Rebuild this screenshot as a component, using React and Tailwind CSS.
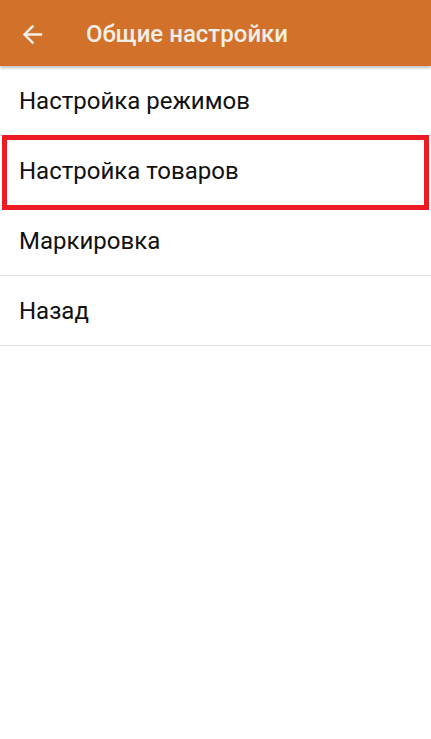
export default function App() {
  const items = ["Настройка режимов", "Настройка товаров", "Маркировка", "Назад"];
  return (
    <div className="w-[431px] h-[739px] bg-white relative overflow-hidden" style={{ fontFamily: "Roboto, 'Noto Sans', sans-serif" }}>
      <div className="h-[66px] bg-[#d2722a] flex items-center relative z-10 shadow-[0_2px_3px_rgba(0,0,0,0.25)]">
        <div className="w-[86px] flex items-center pl-[18px] pt-[2px]">
          <svg width="29" height="29" viewBox="0 0 24 24">
            <path d="M20 11H7.83l5.59-5.59L12 4l-8 8 8 8 1.41-1.41L7.83 13H20v-2z" fill="#f5f0ea" />
          </svg>
        </div>
        <span className="text-[24px] font-medium text-[#f3eee8] pt-[2px]">Общие настройки</span>
      </div>
      <div className="flex flex-col">
        {items.map((t, i) => (
          <div key={i} className="h-[70px] border-b border-[#e0e0e0] flex items-center pl-[19px] text-[24px] text-[#111]">
            {t}
          </div>
        ))}
      </div>
      <div className="absolute left-[2px] top-[135px] w-[427px] h-[75px] border-[5px] border-[#ed1c24] pointer-events-none" />
    </div>
  );
}
